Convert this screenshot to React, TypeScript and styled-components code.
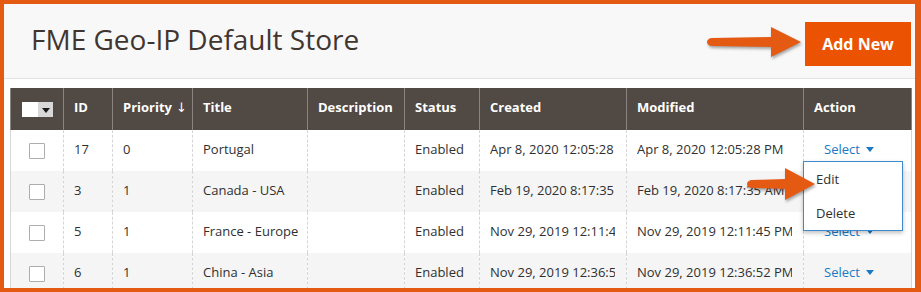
import React from "react";
import styled, { createGlobalStyle } from "styled-components";

const Global = createGlobalStyle`
  html, body { margin: 0; padding: 0; background: #fff; }
  body { font-family: "Open Sans", "Liberation Sans", sans-serif; }
`;

const ORANGE = "#e55a13";

const Frame = styled.div`
  position: relative;
  width: 921px;
  height: 292px;
  box-sizing: border-box;
  border-style: solid;
  border-color: ${ORANGE};
  border-width: 4px 6px 4px 4px;
  overflow: hidden;
  background: #fff;
  display: flex;
  flex-direction: column;
`;

const PageHeader = styled.header`
  position: relative;
  flex: none;
  height: 75px;
  box-sizing: border-box;
  background: #f8f8f8;
  border-bottom: 1px solid #e3e3e3;
  display: flex;
  align-items: center;
  justify-content: space-between;
  padding: 0 4px 0 27px;
`;

const Title = styled.h1`
  margin: 0 0 4px;
  font-family: "Open Sans", sans-serif;
  font-weight: 400;
  font-size: 28px;
  color: #41362f;
`;

const PrimaryButton = styled.button`
  width: 106px;
  height: 44px;
  margin-top: 6px;
  border: 0;
  background: #eb5202;
  color: #fff;
  font-family: "Open Sans", sans-serif;
  font-weight: 700;
  font-size: 16px;
  padding: 0;
`;

const ArrowWrap = styled.div<{ $left: number; $top: number }>`
  position: absolute;
  left: ${(p) => p.$left}px;
  top: ${(p) => p.$top}px;
  z-index: 5;
  pointer-events: none;
  filter: drop-shadow(1px 2px 1.5px rgba(0, 0, 0, 0.35));
`;

const GridArea = styled.div`
  flex: 1;
  padding: 9px 4px 0 6px;
`;

const Grid = styled.table`
  width: 901px;
  table-layout: fixed;
  border-collapse: collapse;
  border-left: 1px solid #d6d6d6;
  border-right: 1px solid #d6d6d6;
  font-family: "Open Sans", sans-serif;
`;

const HeadCell = styled.th`
  height: 42px;
  box-sizing: border-box;
  padding: 0 10px 4px;
  background: #514943;
  color: #fff;
  font-weight: 700;
  font-size: 13px;
  text-align: left;
  white-space: nowrap;
  border-left: 1px solid #8a837f;
  border-right: 1px solid #8a837f;
`;

const Row = styled.tr<{ $alt: boolean }>`
  background: ${(p) => (p.$alt ? "#f5f5f5" : "#fff")};
`;

const Cell = styled.td<{ $center?: boolean; $visible?: boolean }>`
  position: relative;
  height: 41px;
  box-sizing: border-box;
  padding: 0 11px 3px 10px;
  color: #303030;
  font-size: 13px;
  white-space: nowrap;
  overflow: ${(p) => (p.$visible ? "visible" : "hidden")};
  text-align: ${(p) => (p.$center ? "center" : "left")};
  border-left: 1px dashed #d6d6d6;
  border-right: 1px dashed #d6d6d6;
`;

const CellText = styled.div`
  overflow: hidden;
  white-space: nowrap;
`;

const MultiSelect = styled.div`
  display: inline-flex;
  vertical-align: middle;
  height: 15px;
  margin: 4px 0 0 1px;
`;

const MultiBox = styled.span`
  width: 16px;
  height: 15px;
  background: #fff;
`;

const MultiToggle = styled.span`
  width: 15px;
  height: 15px;
  background: #d8d8d8;
  display: flex;
  align-items: center;
  justify-content: center;
  &::after {
    content: "";
    border-left: 4px solid transparent;
    border-right: 4px solid transparent;
    border-top: 5px solid #1a1a1a;
    margin-top: 1px;
  }
`;

const Checkbox = styled.span`
  display: inline-block;
  vertical-align: middle;
  width: 16px;
  height: 16px;
  margin-top: 3px;
  box-sizing: border-box;
  border: 1px solid #adadad;
  background: #fff;
  border-radius: 1px;
`;

const SortMark = styled.span`
  font-family: "DejaVu Sans", sans-serif;
  font-weight: 400;
  font-size: 13px;
  margin-left: 4px;
`;

const SelectLink = styled.span`
  display: inline-flex;
  align-items: center;
  gap: 6px;
  margin-left: 10px;
  color: #1979c3;
  font-size: 13px;
  &::after {
    content: "";
    border-left: 4px solid transparent;
    border-right: 4px solid transparent;
    border-top: 5px solid #1979c3;
    margin-top: 1px;
  }
`;

const ActionMenu = styled.ul`
  position: absolute;
  left: -1px;
  top: 31px;
  z-index: 4;
  width: 100px;
  height: 70px;
  box-sizing: border-box;
  margin: 0;
  padding: 0;
  list-style: none;
  background: #fff;
  border: 1px solid #3d8ad0;
  box-shadow: 0 2px 4px rgba(0, 0, 0, 0.25);
  display: flex;
  flex-direction: column;
  justify-content: space-around;
`;

const MenuItem = styled.li`
  padding: 0 12px;
  color: #303030;
  font-size: 13px;
  line-height: 20px;
`;

function Arrow({ w, h, shaft }: { w: number; h: number; shaft: number }) {
  const mid = h / 2;
  const headLen = 30;
  const s = shaft / 2;
  const d = `M ${s} ${mid - s + 1} L ${w - headLen} ${mid - s} L ${w - headLen} 0 L ${w} ${mid} L ${w - headLen} ${h} L ${w - headLen} ${mid + s} L ${s} ${mid + s - 1} A ${s} ${s - 1} 0 0 1 ${s} ${mid - s + 1} Z`;
  return (
    <svg width={w + 4} height={h + 4} viewBox={`0 0 ${w + 4} ${h + 4}`}>
      <path d={d} fill={ORANGE} />
    </svg>
  );
}

type Rec = {
  id: string;
  priority: string;
  title: string;
  created: string;
  modified: string;
};

const rows: Rec[] = [
  { id: "17", priority: "0", title: "Portugal", created: "Apr 8, 2020 12:05:28 PM", modified: "Apr 8, 2020 12:05:28 PM" },
  { id: "3", priority: "1", title: "Canada - USA", created: "Feb 19, 2020 8:17:35 AM", modified: "Feb 19, 2020 8:17:35 AM" },
  { id: "5", priority: "1", title: "France - Europe", created: "Nov 29, 2019 12:11:45 PM", modified: "Nov 29, 2019 12:11:45 PM" },
  { id: "6", priority: "1", title: "China - Asia", created: "Nov 29, 2019 12:36:52 PM", modified: "Nov 29, 2019 12:36:52 PM" },
];

const widths = [53, 49, 80, 115, 97, 75, 147, 177, 108];

export default function App() {
  return (
    <>
      <Global />
      <Frame>
        <PageHeader>
          <Title>FME Geo-IP Default Store</Title>
          <PrimaryButton>Add New</PrimaryButton>
          <ArrowWrap $left={703} $top={23}>
            <Arrow w={94} h={30} shaft={10} />
          </ArrowWrap>
        </PageHeader>
        <GridArea>
          <Grid>
            <colgroup>
              {widths.map((w, i) => (
                <col key={i} style={{ width: w }} />
              ))}
            </colgroup>
            <thead>
              <tr>
                <HeadCell>
                  <MultiSelect>
                    <MultiBox />
                    <MultiToggle />
                  </MultiSelect>
                </HeadCell>
                <HeadCell>ID</HeadCell>
                <HeadCell>
                  Priority<SortMark>↓</SortMark>
                </HeadCell>
                <HeadCell>Title</HeadCell>
                <HeadCell>Description</HeadCell>
                <HeadCell>Status</HeadCell>
                <HeadCell>Created</HeadCell>
                <HeadCell>Modified</HeadCell>
                <HeadCell>Action</HeadCell>
              </tr>
            </thead>
            <tbody>
              {rows.map((r, i) => (
                <Row key={r.id} $alt={i % 2 === 1}>
                  <Cell $center>
                    <Checkbox />
                  </Cell>
                  <Cell>{r.id}</Cell>
                  <Cell>{r.priority}</Cell>
                  <Cell $visible>{r.title}</Cell>
                  <Cell />
                  <Cell>Enabled</Cell>
                  <Cell>
                    <CellText>{r.created}</CellText>
                  </Cell>
                  <Cell>
                    <CellText>{r.modified}</CellText>
                  </Cell>
                  <Cell $visible>
                    <SelectLink>Select</SelectLink>
                    {i === 0 && (
                      <ActionMenu>
                        <MenuItem>Edit</MenuItem>
                        <MenuItem>Delete</MenuItem>
                      </ActionMenu>
                    )}
                  </Cell>
                </Row>
              ))}
            </tbody>
          </Grid>
        </GridArea>
        <ArrowWrap $left={743} $top={164}>
          <Arrow w={68} h={32} shaft={10} />
        </ArrowWrap>
      </Frame>
    </>
  );
}
